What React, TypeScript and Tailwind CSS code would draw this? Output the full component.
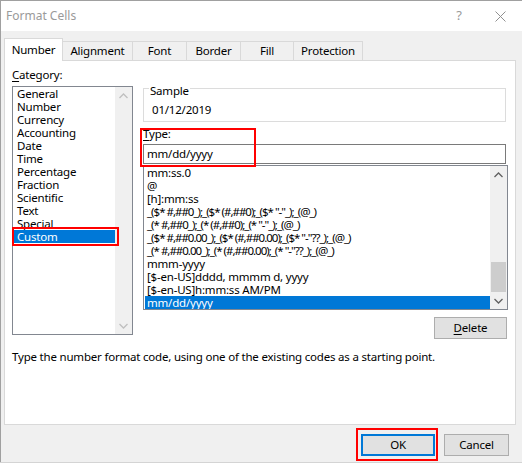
import React from "react";

const categories = [
  "General",
  "Number",
  "Currency",
  "Accounting",
  "Date",
  "Time",
  "Percentage",
  "Fraction",
  "Scientific",
  "Text",
  "Special",
  "Custom",
];

const formats = [
  "mm:ss.0",
  "@",
  "[h]:mm:ss",
  '_($* #,##0_);_($* (#,##0);_($* "-"_);_(@_)',
  '_(* #,##0_);_(* (#,##0);_(* "-"_);_(@_)',
  '_($* #,##0.00_);_($* (#,##0.00);_($* "-"??_);_(@_)',
  '_(* #,##0.00_);_(* (#,##0.00);_(* "-"??_);_(@_)',
  "mmm-yyyy",
  "[$-en-US]dddd, mmmm d, yyyy",
  "[$-en-US]h:mm:ss AM/PM",
  "mm/dd/yyyy",
];

const tabs = [
  { label: "Alignment", w: "w-[70px]" },
  { label: "Font", w: "w-[54px]" },
  { label: "Border", w: "w-[54px]" },
  { label: "Fill", w: "w-[53px]" },
  { label: "Protection", w: "w-[69px]" },
];

function Chevron({ up, color }: { up?: boolean; color: string }) {
  return (
    <svg width="9" height="6" viewBox="0 0 9 6">
      <polyline
        points={up ? "0.5,5 4.5,1 8.5,5" : "0.5,1 4.5,5 8.5,1"}
        fill="none"
        stroke={color}
        strokeWidth="1.3"
      />
    </svg>
  );
}

function Scrollbar({ color, thumb }: { color: string; thumb?: boolean }) {
  return (
    <div className="flex flex-col bg-[#f0f0f0] w-[17px] shrink-0">
      <div className="h-[17px] flex items-center justify-center">
        <Chevron up color={color} />
      </div>
      <div className="flex-1" />
      {thumb && <div className="h-[30px] mx-[1px] bg-[#cdcdcd]" />}
      <div className="h-[17px] flex items-center justify-center">
        <Chevron color={color} />
      </div>
    </div>
  );
}

export default function App() {
  return (
    <div
      className="relative w-[522px] h-[464px] overflow-hidden bg-white text-[11.5px] tracking-[-0.2px] text-black"
      style={{ fontFamily: '"Noto Sans", "Open Sans", sans-serif' }}
    >
      <div className="h-[462px] flex flex-col border-t border-l border-[#a0a0a0] bg-[#f0f0f0]">
        {/* title bar */}
        <div className="h-[30px] shrink-0 bg-white flex items-center pl-[5px] text-[12px] tracking-normal text-[#9a9a9a]">
          <span className="flex-1">Format Cells</span>
          <span className="w-[20px] text-center text-[13px] mr-[26px]">?</span>
          <svg width="11" height="11" viewBox="0 0 11 11" className="mr-[16px]">
            <path d="M0.5 0.5L10.5 10.5M10.5 0.5L0.5 10.5" stroke="#909090" strokeWidth="1" />
          </svg>
        </div>

        <div className="flex-1 pl-[3px] pt-[7px] flex flex-col">
          {/* tabs */}
          <div className="flex items-end h-[22px]">
            <div className="relative z-10 -mb-px w-[59px] h-[23px] bg-white border border-b-0 border-[#d9d9d9] flex items-center justify-center">
              Number
            </div>
            {tabs.map((t) => (
              <div
                key={t.label}
                className={`${t.w} h-[19px] border border-l-0 border-b-0 border-[#d9d9d9] flex items-center justify-center`}
              >
                {t.label}
              </div>
            ))}
          </div>

          {/* panel */}
          <div className="w-[512px] h-[365px] border border-[#d9d9d9] bg-white flex flex-col">
            <div className="flex">
              <div className="ml-[7px] w-[121px]">
                <div className="mt-[6px] h-[16px] leading-[16px] mb-[3px]">
                  <span className="underline underline-offset-2">C</span>ategory:
                </div>
                <div className="h-[249px] border border-[#828790] flex">
                  <div className="flex-1 flex flex-col">
                    {categories.map((c) => (
                      <div
                        key={c}
                        className={`h-[13px] leading-[13px] pl-[3px] ml-[1px] ${
                          c === "Custom" ? "bg-[#0078d7] text-white" : ""
                        }`}
                      >
                        {c}
                      </div>
                    ))}
                  </div>
                  <Scrollbar color="#bfbfbf" />
                </div>
              </div>

              <div className="ml-[10px] w-[365px] flex flex-col">
                <div className="relative mt-[27px] h-[34px] w-[363px] border border-[#dcdcdc]">
                  <span className="absolute left-[5px] top-[-5px] bg-white px-[1px] leading-[14px]">
                    Sample
                  </span>
                  <div className="pt-[13px] pl-[8px] leading-[16px]">01/12/2019</div>
                </div>
                <div className="mt-[4px] h-[16px] leading-[16px]">
                  <span className="underline underline-offset-2">T</span>ype:
                </div>
                <div className="mt-[2px] h-[20px] w-[363px] border border-[#7a7a7a] pl-[3px] leading-[18px]">
                  mm/dd/yyyy
                </div>
                <div className="mt-[1px] h-[145px] border border-[#828790] flex">
                  <div className="flex-1 flex flex-col overflow-hidden">
                    {formats.map((f) => (
                      <div
                        key={f}
                        className={`h-[13px] leading-[13px] pl-[2px] ml-[1px] whitespace-nowrap ${
                          f.startsWith("_(") ? "tracking-[-1px]" : ""
                        } ${f === "mm/dd/yyyy" ? "bg-[#0078d7] text-white" : ""}`}
                      >
                        {f}
                      </div>
                    ))}
                  </div>
                  <Scrollbar color="#606060" thumb />
                </div>
                <div className="self-end mr-[1px] mt-[7px] w-[73px] h-[22px] bg-[#e1e1e1] border border-[#adadad] flex items-center justify-center">
                  <span>
                    <span className="underline underline-offset-2">D</span>elete
                  </span>
                </div>
              </div>
            </div>
            <div className="ml-[7px] mt-[10px] leading-[16px]">
              Type the number format code, using one of the existing codes as a starting point.
            </div>
          </div>

          {/* footer */}
          <div className="flex justify-end pr-[13px] mt-[9px]">
            <div className="w-[74px] h-[22px] bg-[#e1e1e1] border-2 border-[#0078d7] flex items-center justify-center">
              OK
            </div>
            <div className="ml-[9px] w-[65px] h-[22px] bg-[#e1e1e1] border border-[#adadad] flex items-center justify-center">
              Cancel
            </div>
          </div>
        </div>
      </div>
      <div className="h-[2px] border-t border-[#d4d4d4] bg-white" />

      {/* red highlight boxes */}
      <div className="absolute left-[12px] top-[227px] w-[107px] h-[19px] border-2 border-[#ff0000]" />
      <div className="absolute left-[140px] top-[128px] w-[116px] h-[39px] border-2 border-[#ff0000]" />
      <div className="absolute left-[356px] top-[428px] w-[82px] h-[33px] border-2 border-[#ff0000]" />
    </div>
  );
}
